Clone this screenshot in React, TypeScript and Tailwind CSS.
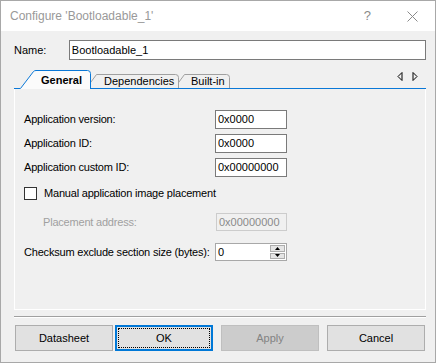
import type { ReactNode } from "react";

const font = "font-['Liberation_Sans',Arial,sans-serif]";

function TextBox({ value, width = "w-[72px]", height = "h-[19px]" }: { value: string; width?: string; height?: string }) {
  return (
    <div className={`${width} ${height} flex items-center border border-[#7a7a7a] bg-white pl-[2px] text-black`}>
      {value}
    </div>
  );
}

function FieldRow({ label, children, className = "" }: { label: string; children: ReactNode; className?: string }) {
  return (
    <div className={`flex items-center ${className}`}>
      <span className="w-[191px] tracking-[-0.2px]">{label}</span>
      {children}
    </div>
  );
}

function Button({ label, disabled, focused }: { label: string; disabled?: boolean; focused?: boolean }) {
  if (focused) {
    return (
      <div className="flex h-[26px] w-[98px] border-2 border-[#0078d7] bg-[#e1e1e1] p-px">
        <div className="flex flex-1 items-center justify-center border border-dotted border-black">{label}</div>
      </div>
    );
  }
  return (
    <div
      className={`flex h-[26px] w-[98px] items-center justify-center border ${
        disabled ? "border-[#bfbfbf] bg-[#cccccc] text-[#838383]" : "border-[#adadad] bg-[#e1e1e1] text-black"
      }`}
    >
      {label}
    </div>
  );
}

export default function App() {
  return (
    <div className={`flex h-[363px] w-[436px] flex-col border border-[#a8a8a8] bg-[#f0f0f0] text-[11px] text-black ${font}`}>
      {/* title bar */}
      <div className="flex h-[30px] items-center bg-white pl-[9px] text-[12px] text-[#999999]">
        <span>Configure 'Bootloadable_1'</span>
        <span className="ml-auto mr-[36px] text-[13px] text-[#8a8a8a]">?</span>
        <svg className="mr-[17px]" width="11" height="11" viewBox="0 0 11 11">
          <path d="M0.5 0.5 L10.5 10.5 M10.5 0.5 L0.5 10.5" stroke="#8a8a8a" strokeWidth="1" />
        </svg>
      </div>

      <div className="flex flex-col pl-[13px] pr-[9px]">
        {/* name */}
        <div className="mt-[9px] flex h-[20px] items-center">
          <span className="w-[55px]">Name:</span>
          <div className="flex h-[20px] w-[358px] items-center border border-[#7a7a7a] bg-white pl-[2px]">Bootloadable_1</div>
        </div>

        {/* tabs */}
        <div className="mt-[10px] flex h-[19px] items-end border-b border-[#0a78d7] pl-[6px]">
          <div className="relative z-30 -mb-px flex h-[19px] w-[71px] items-center pl-[21px] pt-px font-bold">
            <svg className="absolute inset-0" width="71" height="19" viewBox="0 0 71 19">
              <path d="M0 19 L13.5 1.5 Q14.5 0.5 16 0.5 L67.5 0.5 Q70.5 0.5 70.5 3.5 L70.5 19 Z" fill="#fbfbfb" />
              <path d="M0.5 18.5 L13.5 1.5 Q14.5 0.5 16 0.5 L67.5 0.5 Q70.5 0.5 70.5 3.5 L70.5 19" fill="none" stroke="#0a78d7" />
            </svg>
            <span className="relative">General</span>
          </div>
          <div className="relative z-20 -ml-[5px] flex h-[14px] w-[93px] items-center pl-[18px] pt-px">
            <svg className="absolute inset-0" width="93" height="14" viewBox="0 0 93 14">
              <path d="M0.5 14 L10.5 0.5 L89.5 0.5 Q92.5 0.5 92.5 3.5 L92.5 14" fill="#f0f0f0" stroke="#a0a0a0" />
            </svg>
            <span className="relative">Dependencies</span>
          </div>
          <div className="relative z-10 -ml-[5px] flex h-[14px] w-[56px] items-center pl-[17px] pt-px">
            <svg className="absolute inset-0" width="56" height="14" viewBox="0 0 56 14">
              <path d="M0.5 14 L10.5 0.5 L52.5 0.5 Q55.5 0.5 55.5 3.5 L55.5 14" fill="#f0f0f0" stroke="#a0a0a0" />
            </svg>
            <span className="relative">Built-in</span>
          </div>
          <div className="mb-[6px] ml-auto mr-[8px] flex gap-[9px] self-center pt-[1px]">
            <svg width="6" height="9" viewBox="0 0 6 9">
              <path d="M5 0.5 L1 4.5 L5 8.5 Z" fill="none" stroke="#000" strokeWidth="1" />
            </svg>
            <svg width="6" height="9" viewBox="0 0 6 9">
              <path d="M1 0.5 L5 4.5 L1 8.5 Z" fill="none" stroke="#000" strokeWidth="1" />
            </svg>
          </div>
        </div>

        {/* panel */}
        <div className="flex h-[221px] flex-col border-x border-b border-white pl-[9px] pt-[21px]">
          <FieldRow label="Application version:">
            <TextBox value="0x0000" />
          </FieldRow>
          <FieldRow label="Application ID:" className="mt-[5px]">
            <TextBox value="0x0000" />
          </FieldRow>
          <FieldRow label="Application custom ID:" className="mt-[5px]">
            <TextBox value="0x00000000" />
          </FieldRow>

          <div className="mt-[10px] flex h-[13px] items-center gap-[7px]">
            <div className="h-[13px] w-[13px] border border-[#333333] bg-white" />
            <span className="tracking-[-0.2px]">Manual application image placement</span>
          </div>

          <div className="mt-[13px] flex items-center">
            <span className="w-[192px] pl-[19px] tracking-[-0.2px] text-[#a0a0a0]">Placement address:</span>
            <div className="flex h-[18px] w-[71px] items-center border border-[#cccccc] bg-[#f0f0f0] pl-[2px] text-[#8a8a8a]">
              0x00000000
            </div>
          </div>

          <FieldRow label="Checksum exclude section size (bytes):" className="mt-[12px]">
            <div className="flex h-[18px] w-[72px] items-stretch border border-[#a8a8a8] bg-white pl-[2px]">
              <span className="flex flex-1 items-center">0</span>
              <div className="my-px mr-px flex w-[15px] flex-col gap-px">
                <div className="flex flex-1 items-center justify-center border border-[#adadad] bg-[#e5e5e5]">
                  <svg width="5" height="3" viewBox="0 0 5 3">
                    <path d="M2.5 0 L5 3 L0 3 Z" fill="#000" />
                  </svg>
                </div>
                <div className="flex flex-1 items-center justify-center border border-[#adadad] bg-[#e5e5e5]">
                  <svg width="5" height="3" viewBox="0 0 5 3">
                    <path d="M0 0 L5 0 L2.5 3 Z" fill="#000" />
                  </svg>
                </div>
              </div>
            </div>
          </FieldRow>
        </div>

        {/* separator */}
        <div className="mt-[6px] h-[2px] border-t border-b border-t-[#a0a0a0] border-b-white" />

        {/* buttons */}
        <div className="mt-[7px] flex">
          <div className="ml-px">
            <Button label="Datasheet" />
          </div>
          <div className="ml-[2px]">
            <Button label="OK" focused />
          </div>
          <div className="ml-[8px]">
            <Button label="Apply" disabled />
          </div>
          <div className="ml-[8px]">
            <Button label="Cancel" />
          </div>
        </div>
      </div>
    </div>
  );
}
